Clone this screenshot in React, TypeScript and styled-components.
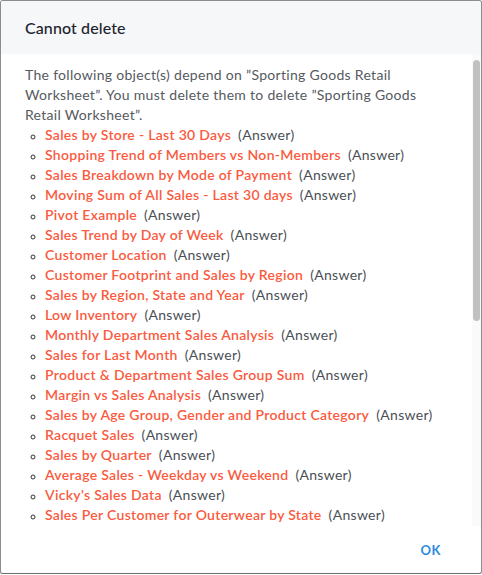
import React, { useLayoutEffect, useRef, useState } from "react";
import styled, { createGlobalStyle } from "styled-components";

const GlobalStyle = createGlobalStyle`
  html, body {
    margin: 0;
    padding: 0;
    background: #ffffff;
  }
  body {
    font-family: Lato, "Open Sans", "Liberation Sans", sans-serif;
  }
`;

type Dependent = { name: string; kind: string };

const OBJECT_NAME = "Sporting Goods Retail Worksheet";
const Q = "\u201D";

const DEPENDENTS: Dependent[] = [
  { name: "Sales by Store - Last 30 Days", kind: "Answer" },
  { name: "Shopping Trend of Members vs Non-Members", kind: "Answer" },
  { name: "Sales Breakdown by Mode of Payment", kind: "Answer" },
  { name: "Moving Sum of All Sales - Last 30 days", kind: "Answer" },
  { name: "Pivot Example", kind: "Answer" },
  { name: "Sales Trend by Day of Week", kind: "Answer" },
  { name: "Customer Location", kind: "Answer" },
  { name: "Customer Footprint and Sales by Region", kind: "Answer" },
  { name: "Sales by Region, State and Year", kind: "Answer" },
  { name: "Low Inventory", kind: "Answer" },
  { name: "Monthly Department Sales Analysis", kind: "Answer" },
  { name: "Sales for Last Month", kind: "Answer" },
  { name: "Product & Department Sales Group Sum", kind: "Answer" },
  { name: "Margin vs Sales Analysis", kind: "Answer" },
  { name: "Sales by Age Group, Gender and Product Category", kind: "Answer" },
  { name: "Racquet Sales", kind: "Answer" },
  { name: "Sales by Quarter", kind: "Answer" },
  { name: "Average Sales - Weekday vs Weekend", kind: "Answer" },
  { name: "Vicky's Sales Data", kind: "Answer" },
  { name: "Sales Per Customer for Outerwear by State", kind: "Answer" },
  // below the fold
  { name: "Top Selling Products", kind: "Answer" },
  { name: "Inventory by Warehouse", kind: "Answer" },
  { name: "Sales by Channel", kind: "Answer" },
  { name: "Returns by Product Category", kind: "Answer" },
  { name: "Year over Year Growth", kind: "Answer" },
  { name: "Sales by Brand", kind: "Answer" },
  { name: "Discount Impact Analysis", kind: "Answer" },
  { name: "Store Performance Overview", kind: "Answer" },
  { name: "Retail Pinboard", kind: "Pinboard" },
  { name: "Regional Sales Pinboard", kind: "Pinboard" },
  { name: "Customer Insights", kind: "Pinboard" },
  { name: "Sales by Season", kind: "Answer" },
  { name: "Weekly Sales Summary", kind: "Answer" },
  { name: "Sales Forecast", kind: "Answer" },
  { name: "Executive Summary", kind: "Pinboard" },
  { name: "Daily Sales Tracker", kind: "Answer" },
  { name: "Monthly Returns", kind: "Answer" },
  { name: "Gift Card Sales", kind: "Answer" },
  { name: "Loyalty Program Summary", kind: "Answer" },
];

export default function App() {
  const bodyRef = useRef<HTMLDivElement>(null);
  const [thumb, setThumb] = useState({ top: 6, height: 0 });

  // fake scrollbar, the headless browser hides the native one
  useLayoutEffect(() => {
    const el = bodyRef.current;
    if (!el) return;
    const update = () => {
      const ratio = el.clientHeight / el.scrollHeight;
      const h = Math.max(30, Math.round(el.clientHeight * ratio));
      const top = 6 + Math.round(el.scrollTop * ratio);
      setThumb({ top, height: h });
    };
    update();
    el.addEventListener("scroll", update);
    return () => el.removeEventListener("scroll", update);
  }, []);

  return (
    <>
      <GlobalStyle />
      <Dialog role="alertdialog" aria-labelledby="dlg-title">
        <Header>
          <Title id="dlg-title">Cannot delete</Title>
        </Header>
        <ScrollArea>
          <Body ref={bodyRef}>
            <Message>
              The following object(s) depend on {Q}
              {OBJECT_NAME}
              {Q}. You must delete them to delete {Q}
              {OBJECT_NAME}
              {Q}.
            </Message>
            <DepList>
              {DEPENDENTS.map((d) => (
                <DepItem key={d.name}>
                  <DepLink href="#">{d.name}</DepLink>
                  <DepKind>({d.kind})</DepKind>
                </DepItem>
              ))}
            </DepList>
          </Body>
          <ScrollTrack>
            {thumb.height > 0 && <ScrollThumb style={{ top: thumb.top, height: thumb.height }} />}
          </ScrollTrack>
        </ScrollArea>
        <Footer>
          <OkButton type="button">OK</OkButton>
        </Footer>
      </Dialog>
    </>
  );
}

const Dialog = styled.div`
  box-sizing: border-box;
  width: 482px;
  height: 574px;
  display: flex;
  flex-direction: column;
  border: 1px solid #8c8c8c;
  border-bottom-color: #6f6f6f;
  border-radius: 3px;
  background: #fff;
  overflow: hidden;
  box-shadow: 0 1px 2px rgba(0, 0, 0, 0.25);
`;

const Header = styled.header`
  flex: none;
  height: 53px;
  display: flex;
  align-items: center;
  padding: 0 24px;
  background: #f6f7f9;
`;

const Title = styled.h2`
  margin: 0;
  font-size: 16px;
  font-weight: 500;
  color: #1d232f;
  letter-spacing: 0.1px;
`;

const ScrollArea = styled.div`
  position: relative;
  flex: 1;
  min-height: 0;
  display: flex;
`;

const Body = styled.div`
  flex: 1;
  min-height: 0;
  overflow-y: scroll;
  scrollbar-width: none;
  padding: 11px 33px 0 24px;
  font-size: 14px;
  line-height: 20px;
  color: #555a61;

  &::-webkit-scrollbar {
    display: none;
  }
`;

const ScrollTrack = styled.div`
  position: absolute;
  top: 0;
  right: 0;
  bottom: 0;
  width: 9px;
  background: #fafafa;
`;

const ScrollThumb = styled.div`
  position: absolute;
  left: 1px;
  width: 7px;
  border-radius: 4px;
  background: #c1c1c1;
`;

const Message = styled.p`
  margin: 0;
  letter-spacing: 0.3px;
`;

const DepList = styled.ul`
  margin: 0;
  padding: 0 0 0 20px;
  list-style: circle;
`;

const DepItem = styled.li`
  letter-spacing: 0.3px;
  white-space: nowrap;
  &::marker {
    color: #333;
    font-size: 11px;
  }
`;

const DepLink = styled.a`
  color: #fa5a3e;
  text-decoration: none;
  font-weight: 600;
  margin-right: 7px;
`;

const DepKind = styled.span`
  color: #4a4f56;
`;

const Footer = styled.footer`
  flex: none;
  height: 47px;
  display: flex;
  align-items: center;
  justify-content: flex-end;
  padding: 0 40px 0 24px;
`;

const OkButton = styled.button`
  border: none;
  background: none;
  padding: 0;
  font-family: inherit;
  font-size: 13px;
  font-weight: 700;
  color: #2f8ae0;
  letter-spacing: 0.5px;
  cursor: pointer;
`;
